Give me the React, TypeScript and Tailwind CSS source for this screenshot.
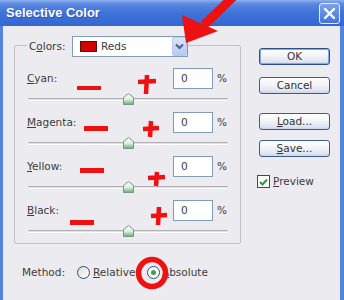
import React from "react";

const BODY_BG = "bg-[#ecebef]";

function Thumb() {
  return (
    <svg width="11" height="12" viewBox="0 0 11 12" className="absolute top-[4px] left-[95px]">
      <defs>
        <linearGradient id="tg" x1="0" y1="0" x2="0" y2="1">
          <stop offset="0" stopColor="#ffffff" />
          <stop offset="0.55" stopColor="#d9eedd" />
          <stop offset="1" stopColor="#5fae73" />
        </linearGradient>
      </defs>
      <polygon points="0.5,4.5 5.5,0.5 10.5,4.5 10.5,11.5 0.5,11.5" fill="url(#tg)" stroke="#7b9684" strokeWidth="1" />
    </svg>
  );
}

function Row({ first, label }: { first?: boolean; label: React.ReactNode }) {
  return (
    <div className={first ? "mt-[11px]" : ""}>
      <div className="flex items-center h-[21px] pl-[12px]">
        <span className="w-[146px]">{label}</span>
        <div className="w-[40px] h-[21px] border border-[#7f9db9] bg-white pl-[7px] flex items-center">0</div>
        <span className="ml-[4px]">%</span>
      </div>
      <div className="relative h-[23px] ml-[13px] w-[200px] pt-[9px]">
        <div className="h-[3px] border-t border-[#b0b0b4] border-b border-b-white bg-[#e2e1e6] rounded-[1px]" />
        <Thumb />
      </div>
    </div>
  );
}

function Btn({ children, def }: { children: React.ReactNode; def?: boolean }) {
  return (
    <div
      className={
        "w-[71px] h-[17px] rounded-[3px] border flex items-center justify-center text-[#333] bg-[linear-gradient(to_bottom,#ffffff_0%,#f3f4f8_45%,#dfe4f0_85%,#c8d2e8_100%)] " +
        (def
          ? "border-[#2b4e8c] shadow-[inset_0_0_0_1px_#86a8ea]"
          : "border-[#3b5c98]")
      }
    >
      {children}
    </div>
  );
}

export default function App() {
  return (
    <div className="relative w-[344px] h-[300px] flex flex-col overflow-hidden font-['DejaVu_Sans',sans-serif] text-[10.5px] text-[#3c3c3c]">
      {/* Title bar */}
      <div className="h-[26px] shrink-0 flex items-center justify-between pl-[6px] pr-[4px] bg-[linear-gradient(to_bottom,#8db0ee_0%,#5a88e2_15%,#3f71d8_50%,#3468d1_100%)]">
        <span className="text-white font-bold text-[13px] font-['Liberation_Sans',sans-serif] [text-shadow:1px_1px_0_#2a55b0]">
          Selective Color
        </span>
        <div className="w-[21px] h-[21px] rounded-[3px] border border-[#e8eefc] bg-[linear-gradient(to_bottom,#7ea3ea,#4474d8)] flex items-center justify-center">
          <svg width="13" height="13" viewBox="0 0 13 13">
            <path d="M2 2 L11 11 M11 2 L2 11" stroke="white" strokeWidth="2.4" strokeLinecap="round" />
          </svg>
        </div>
      </div>

      {/* Body */}
      <div className={"flex-1 flex border-l-[3px] border-r-[4px] border-l-[#5583dc] border-r-[#5583dc] " + BODY_BG}>
        {/* Left column */}
        <div className="ml-[11px] flex flex-col">
          <div className="mt-[19px] w-[227px] h-[199px] border border-[#c3c1c8] rounded-[2px] flex flex-col">
            <div className="-mt-[10px] ml-[12px] flex items-center h-[21px]">
              <span className={"w-[45px] pl-[2px] " + BODY_BG}>
                C<span className="underline">o</span>lors:
              </span>
              <div className="w-[116px] h-[21px] border border-[#7f9db9] bg-white flex items-center">
                <div className="ml-[7px] w-[17px] h-[11px] bg-[#d40000] border border-[#5a1010]" />
                <span className="ml-[4px] flex-1">Reds</span>
                <div className="w-[15px] h-[19px] rounded-[2px] border border-[#b9c9ef] bg-[linear-gradient(to_bottom,#dbe5fb,#b7c9f3)] flex items-center justify-center">
                  <svg width="9" height="7" viewBox="0 0 9 7">
                    <path d="M1 1.5 L4.5 5 L8 1.5" fill="none" stroke="#4d6185" strokeWidth="2" />
                  </svg>
                </div>
              </div>
            </div>
            <Row first label={<><span className="underline">C</span>yan:</>} />
            <Row label={<><span className="underline">M</span>agenta:</>} />
            <Row label={<><span className="underline">Y</span>ellow:</>} />
            <Row label={<><span className="underline">B</span>lack:</>} />
          </div>

          <div className="mt-[22px] ml-[8px] flex items-center h-[13px]">
            <span className="w-[55px]">Method:</span>
            <div className="w-[13px] h-[13px] rounded-full border border-[#1d5281] bg-[linear-gradient(to_bottom_right,#dcdcd6,#ffffff)]" />
            <span className="ml-[3px] w-[54px]">
              <span className="underline">R</span>elative
            </span>
            <div className="w-[13px] h-[13px] rounded-full border border-[#1d5281] bg-white flex items-center justify-center">
              <div className="w-[5px] h-[5px] rounded-full bg-[#2fa83f]" />
            </div>
            <span className="ml-[2px]">
              <span className="underline">A</span>bsolute
            </span>
          </div>
        </div>

        {/* Right column */}
        <div className="ml-[18px] flex flex-col">
          <div className="mt-[22px]">
            <Btn def>OK</Btn>
          </div>
          <div className="mt-[12px]">
            <Btn>Cancel</Btn>
          </div>
          <div className="mt-[19px]">
            <Btn>
              <span><span className="underline">L</span>oad...</span>
            </Btn>
          </div>
          <div className="mt-[10px]">
            <Btn>
              <span><span className="underline">S</span>ave...</span>
            </Btn>
          </div>
          <div className="mt-[17px] -ml-[2px] flex items-center">
            <div className="w-[13px] h-[13px] border border-[#1d5281] bg-white flex items-center justify-center">
              <svg width="9" height="8" viewBox="0 0 9 8">
                <path d="M1 4 L3.5 6.5 L8 1.5" fill="none" stroke="#21a121" strokeWidth="2" />
              </svg>
            </div>
            <span className="ml-[3px]">
              <span className="underline">P</span>review
            </span>
          </div>
        </div>
      </div>

      {/* Red annotations overlay */}
      <svg className="absolute left-0 top-0 pointer-events-none" width="344" height="300" viewBox="0 0 344 300">
        <g fill="#ee1111" stroke="none">
          {/* arrow */}
          <line x1="233" y1="-3" x2="204" y2="25" stroke="#ee1111" strokeWidth="9" />
          <polygon points="186,43 182,15 218,31" />
          {/* minus signs */}
          <rect x="77" y="86" width="24" height="4" />
          <rect x="84" y="126" width="24" height="5" />
          <rect x="80" y="168" width="24" height="5" />
          <rect x="70" y="220" width="24" height="5" />
        </g>
        <g stroke="#ee1111" strokeWidth="4.5" strokeLinecap="butt" fill="none">
          {/* plus signs */}
          <path d="M138 82 L156 81 M147 75 L146 94" />
          <path d="M143 129 L159 128 M151 121 L150 137" />
          <path d="M148 178 L165 177 M157 172 L156 186" />
          <path d="M151 216 L167 215 M159 207 L158 225" />
        </g>
        <circle cx="152" cy="273" r="13.5" fill="none" stroke="#ee1111" strokeWidth="5.5" />
      </svg>
    </div>
  );
}
